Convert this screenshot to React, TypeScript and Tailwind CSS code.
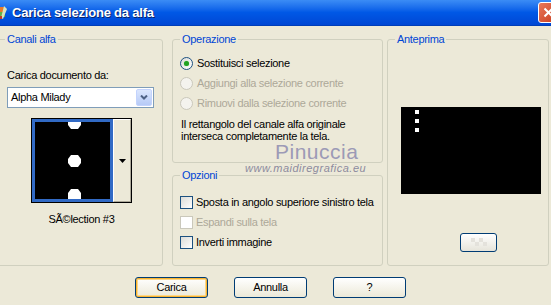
import React from 'react';

const Radio = ({ checked, disabled, label }: { checked?: boolean; disabled?: boolean; label: string }) => (
    <div className="flex items-center gap-[4px] h-[20px] whitespace-nowrap">
        <span
            className={`w-[13px] h-[13px] rounded-full border flex items-center justify-center ${
                disabled ? 'border-[#cac8bb] bg-[#f4f3ee]' : 'border-[#1c5180] bg-gradient-to-br from-[#dcdcd7] to-white'
            }`}
        >
            {checked && <span className="w-[5px] h-[5px] rounded-full bg-[#21a121] shadow-[0_0_1px_#5fd35f]" />}
        </span>
        <span className={disabled ? 'text-[#aca899]' : 'text-black'}>{label}</span>
    </div>
);

const Check = ({ disabled, label }: { disabled?: boolean; label: string }) => (
    <div className="flex items-center gap-[3px] h-[20px] whitespace-nowrap">
        <span
            className={`w-[13px] h-[13px] border ${
                disabled ? 'border-[#cac8bb] bg-white' : 'border-[#1c5180] bg-gradient-to-br from-[#dcdcd7] to-white'
            }`}
        />
        <span className={disabled ? 'text-[#aca899]' : 'text-black'}>{label}</span>
    </div>
);

const XpButton = ({ label, focused }: { label: string; focused?: boolean }) => (
    <button
        className={`w-[73px] h-[21px] rounded-[3px] border border-[#003c74] bg-gradient-to-b from-white to-[#ece9d8] text-black ${
            focused ? 'shadow-[inset_0_0_0_1px_#f8b330,inset_0_0_0_2px_#fdd889]' : ''
        }`}
    >
        {label}
    </button>
);

export default function App() {
    return (
        <div className="relative w-[551px] h-[305px] overflow-hidden bg-[#ece9d8] flex flex-col text-[11px] leading-[13px] tracking-[-0.3px] font-['Liberation_Sans',Arial,sans-serif]">
            {/* Title bar */}
            <div className="h-[26px] shrink-0 flex items-center bg-gradient-to-b from-[#3b8cf5] via-[#0058e6] to-[#0047d4] border-b border-[#003eb8]">
                <svg width="10" height="16" viewBox="0 0 10 16" className="-ml-[2px]">
                    <rect x="0" y="2" width="6" height="5" fill="#e87b2a" />
                    <rect x="2" y="7" width="5" height="5" fill="#63b347" />
                    <path d="M6 1 L9 4 L5 14 L3 13 Z" fill="#d9e4c0" />
                    <rect x="0" y="11" width="4" height="3" fill="#c23a2a" />
                </svg>
                <span className="ml-[4px] text-white font-bold text-[13px] tracking-[-0.2px] [text-shadow:1px_1px_0_#0a246a]">
                    Carica selezione da alfa
                </span>
                <div className="ml-auto -mr-[8px] w-[21px] h-[21px] rounded-[3px] border border-white bg-gradient-to-br from-[#e8785a] to-[#c8391a] flex items-center justify-center">
                    <svg width="11" height="11" viewBox="0 0 11 11">
                        <path d="M1.5 1.5 L9.5 9.5 M9.5 1.5 L1.5 9.5" stroke="white" strokeWidth="2" />
                    </svg>
                </div>
            </div>

            {/* Main */}
            <div className="flex mt-[7px] h-[233px]">
                {/* Canali alfa */}
                <fieldset className="-ml-[3px] w-[166px] border border-[#d0d0bf] rounded-[3px] flex flex-col">
                    <legend className="ml-[7px] px-[2px] text-[#0046d5]">Canali alfa</legend>
                    <div className="pl-[9px] pr-[8px] pt-[23px]">
                        <div>Carica documento da:</div>
                        <div className="mt-[5px] h-[21px] border border-[#7f9db9] bg-white flex items-center">
                            <span className="pl-[3px]">Alpha Milady</span>
                            <span className="ml-auto mr-[1px] w-[16px] h-[17px] rounded-[2px] bg-gradient-to-b from-[#dbe6fe] to-[#b6caf6] border border-[#c3d3fd] flex items-center justify-center">
                                <svg width="8" height="5" viewBox="0 0 8 5">
                                    <path d="M1 0.5 L4 3.5 L7 0.5" stroke="#4d6185" strokeWidth="2" fill="none" />
                                </svg>
                            </span>
                        </div>
                        <div className="mt-[10px] flex justify-center pl-[2px]">
                            <div className="flex border border-black">
                                <div className="w-[81px] h-[83px] border-[3px] border-[#316ac5] bg-black">
                                    <svg width="75" height="77" viewBox="0 0 75 77">
                                        <polygon points="33,0 46,0 46,3 43,7 36,7 33,3" fill="white" />
                                        <polygon points="36,33 43,33 46,37 46,41 43,45 36,45 33,41 33,37" fill="white" />
                                        <polygon points="36,67 43,67 46,71 46,77 33,77 33,71" fill="white" />
                                    </svg>
                                </div>
                                <div className="w-[18px] border-l border-t border-white border-r border-r-[#aca899] border-b border-b-[#aca899] bg-[#ece9d8] flex items-center justify-center">
                                    <svg width="7" height="4" viewBox="0 0 7 4">
                                        <path d="M0 0 H7 L3.5 4 Z" fill="black" />
                                    </svg>
                                </div>
                            </div>
                        </div>
                        <div className="mt-[10px] text-center pl-[2px]">SÃ©lection #3</div>
                    </div>
                </fieldset>

                {/* Middle column */}
                <div className="ml-[9px] w-[211px] flex flex-col gap-[6px]">
                    <fieldset className="h-[130px] border border-[#d0d0bf] rounded-[3px]">
                        <legend className="ml-[7px] px-[2px] text-[#0046d5]">Operazione</legend>
                        <div className="pl-[7px] pt-[7px]">
                            <Radio checked label="Sostituisci selezione" />
                            <Radio disabled label="Aggiungi alla selezione corrente" />
                            <Radio disabled label="Rimuovi dalla selezione corrente" />
                            <p className="mt-[5px] pl-[1px] leading-[12px]">
                                Il rettangolo del canale alfa originale
                                <br />
                                interseca completamente la tela.
                            </p>
                        </div>
                    </fieldset>
                    <fieldset className="flex-1 border border-[#d0d0bf] rounded-[3px]">
                        <legend className="ml-[7px] px-[2px] text-[#0046d5]">Opzioni</legend>
                        <div className="pl-[7px] pt-[10px]">
                            <Check label="Sposta in angolo superiore sinistro tela" />
                            <Check disabled label="Espandi sulla tela" />
                            <Check label="Inverti immagine" />
                        </div>
                    </fieldset>
                </div>

                {/* Anteprima */}
                <fieldset className="ml-[4px] w-[162px] border border-[#d0d0bf] rounded-[3px]">
                    <legend className="ml-[7px] px-[2px] text-[#0046d5]">Anteprima</legend>
                    <div className="pl-[13px] pt-[61px] flex flex-col">
                        <div className="w-[140px] h-[87px] bg-black relative">
                            <span className="absolute left-[14px] top-[3px] w-[4px] h-[4px] bg-white" />
                            <span className="absolute left-[14px] top-[12px] w-[4px] h-[4px] bg-white" />
                            <span className="absolute left-[14px] top-[21px] w-[4px] h-[4px] bg-white" />
                        </div>
                        <div className="mt-[39px] ml-[59px] w-[37px] h-[19px] rounded-[3px] border border-[#003c74] bg-gradient-to-b from-white to-[#e6e4da] flex items-center justify-center">
                            <svg width="16" height="10" viewBox="0 0 16 10">
                                <rect x="0" y="0" width="4" height="4" fill="#e4e2dc" />
                                <rect x="8" y="0" width="4" height="4" fill="#e4e2dc" />
                                <rect x="4" y="4" width="4" height="4" fill="#e4e2dc" />
                                <rect x="12" y="4" width="4" height="4" fill="#e4e2dc" />
                            </svg>
                        </div>
                    </div>
                </fieldset>
            </div>

            {/* Buttons */}
            <div className="flex gap-[26px] pl-[135px] mt-[11px]">
                <XpButton label="Carica" focused />
                <XpButton label="Annulla" />
                <XpButton label="?" />
            </div>

            {/* Watermark */}
            <span className="pointer-events-none absolute left-[275px] top-[142px] text-[21px] leading-[19px] tracking-[0.5px] text-[#9c9ab6]">
                Pinuccia
            </span>
            <span className="pointer-events-none absolute left-[245px] top-[163px] italic text-[11px] leading-[10px] tracking-[0.5px] text-[#8d8b9e]">
                www.maidiregrafica.eu
            </span>
        </div>
    );
}
